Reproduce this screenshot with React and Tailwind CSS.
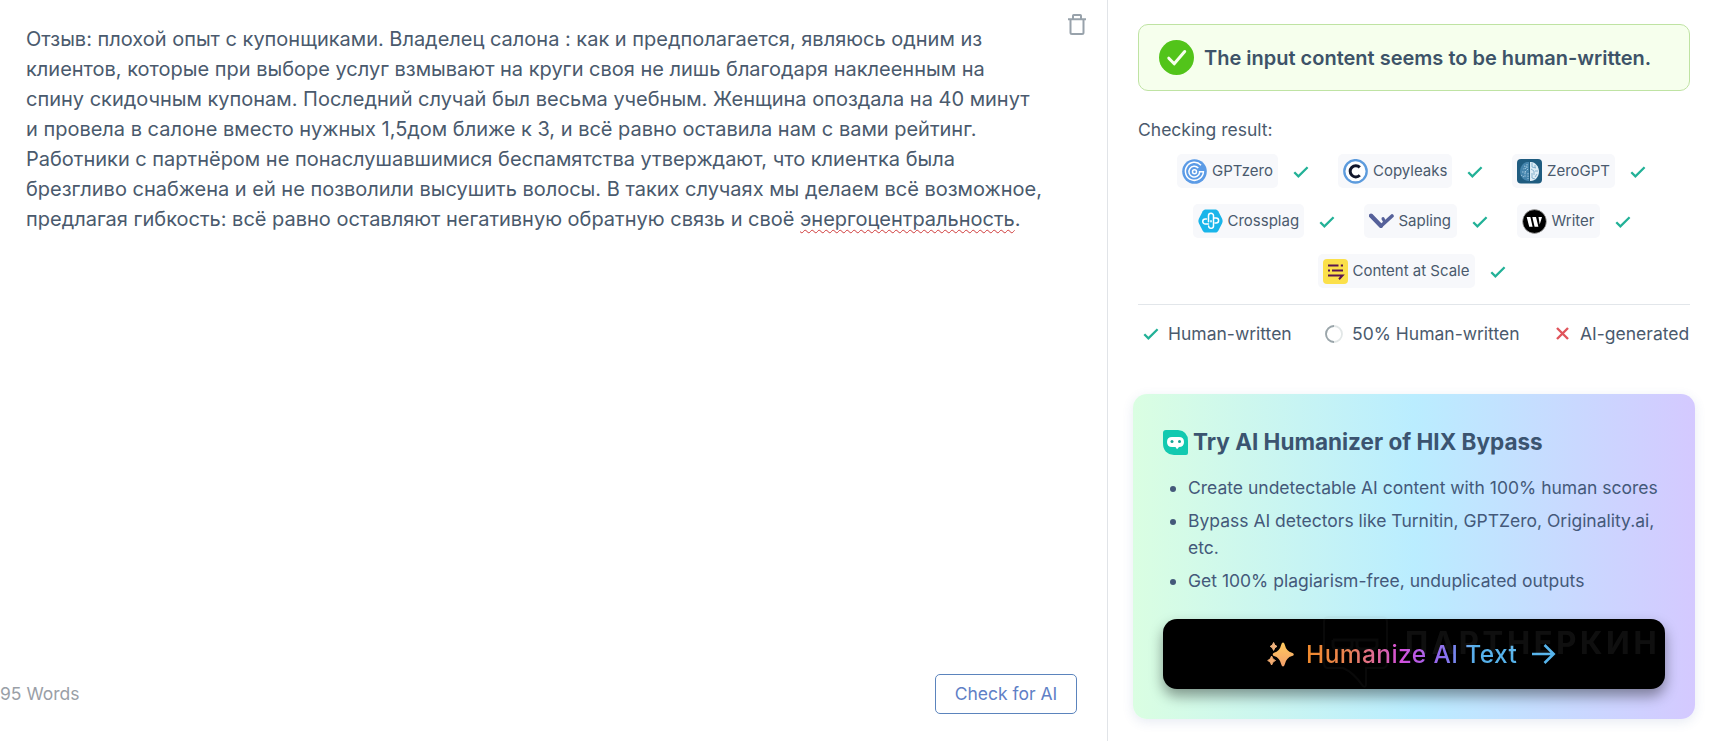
import React from "react";

const Check = ({ className = "" }) => (
    <svg className={className} width="16" height="12" viewBox="0 0 16 12" fill="none" stroke="#22b197" strokeWidth="2.3">
        <path d="M1.3 6.2 5.4 10.3 14.6 1.3" />
    </svg>
);

const GptZeroLogo = () => (
    <svg width="25" height="25" viewBox="0 0 25 25" fill="none">
        <circle cx="12.5" cy="12.5" r="12.3" fill="#5b9be6" />
        <g stroke="#fff" strokeWidth="1.5">
            <path d="M19 6.2a9 9 0 1 0 2.4 6.6h-4.6" />
            <path d="M16.3 9a5.4 5.4 0 1 0 1.4 4.2" />
            <circle cx="12.5" cy="12.7" r="2" />
        </g>
    </svg>
);

const CopyleaksLogo = () => (
    <svg width="25" height="25" viewBox="0 0 25 25" fill="none">
        <circle cx="12.5" cy="12.3" r="11.2" fill="#fff" stroke="#5c9bdd" strokeWidth="2.3" />
        <path d="M16.8 8.4a5.6 5.6 0 1 0 0 7.8" stroke="#10162b" strokeWidth="3" />
    </svg>
);

const ZeroGptLogo = () => (
    <svg width="25" height="25" viewBox="0 0 25 25" fill="none">
        <rect width="25" height="24.5" rx="4" fill="#1f5c80" />
        <path d="M12 3c-4.6-.8-9 4-9 9.5S7.4 22.6 12 22z" fill="#4584ac" />
        <path d="M13 3c4.6-.8 9 4 9 9.5S17.6 22.6 13 22z" fill="#dcebf5" />
        <g stroke="#b9d8ec" strokeWidth=".8" strokeDasharray="1.5 1">
            <path d="M10 5v4l-4 1M11 10l-3 3v5M5 13h4M11 14v6M7 7l3 1M4 16l3 2" />
        </g>
        <g stroke="#6fa3c4" strokeWidth=".8">
            <path d="M15 4v4l4 1M14 10l3 2v4M21 12h-3M15 14v5l3 1M18 6v3M20 15l-2 3" />
        </g>
    </svg>
);

const CrossplagLogo = () => (
    <svg width="25" height="24" viewBox="0 0 25 24" fill="none">
        <path d="M8 .5h9c1.5 0 2.5.5 3.3 1.8l3.7 7.2c.8 1.7.8 3.3 0 5l-3.7 7.2c-.8 1.3-1.8 1.8-3.3 1.8H8c-1.5 0-2.5-.5-3.3-1.8L1 14.5c-.8-1.7-.8-3.3 0-5l3.7-7.2C5.5 1 6.5.5 8 .5z" fill="#19b5ea" />
        <path d="M10.5 12.8v-6a2.5 2.5 0 0 1 5 0v9.8a2.4 2.4 0 0 1-4.9.4M10.500 15H7.300a2.500 2.500 0 0 1 0-5.100h1.200M13 12.700v-1M15.500 9h2.600a2.500 2.500 0 0 1 0 5h-1" stroke="#fff" strokeWidth="1.5" strokeLinecap="round" />
    </svg>
);

const SaplingLogo = () => (
    <svg width="25" height="25" viewBox="0 0 25 25" fill="none" stroke="#56619a" strokeLinecap="round" strokeLinejoin="round">
        <path d="M2 7 12 17 23 7" strokeWidth="3.6" />
        <path d="M2 6.5 12 17" strokeWidth="4" />
        <path d="M14 9.500l1.500 3" strokeWidth="3" />
    </svg>
);

const WriterLogo = () => (
    <svg width="25" height="25" viewBox="0 0 25 25">
        <circle cx="12.5" cy="12.5" r="11.9" fill="#000" stroke="#b9b9b9" strokeWidth=".7" />
        <path d="M4.7 8h3.7l2.2 9.7H7.2zM10.3 8H14l2.4 9.7h-3.8zM16.5 8H20l-2.300 7.500z" fill="#fff" />
    </svg>
);

const ScaleLogo = () => (
    <svg width="25" height="25" viewBox="0 0 25 25" stroke="#5a1550" strokeWidth="2" fill="none">
        <rect width="25" height="25" rx="4" fill="#fbe04a" stroke="none" />
        <path d="M5 6.5h10.5M17.8 6.5h2.2M5 11.5h2M9 11.5h11M5 16.5h14.5L16 20.3" />
    </svg>
);

const rows = [
    [
        { name: "GPTzero", logo: <GptZeroLogo />, width: "w-[101px]" },
        { name: "Copyleaks", logo: <CopyleaksLogo />, width: "w-[114px]" },
        { name: "ZeroGPT", logo: <ZeroGptLogo />, width: "w-[103px]" },
    ],
    [
        { name: "Crossplag", logo: <CrossplagLogo />, width: "w-[111px]" },
        { name: "Sapling", logo: <SaplingLogo />, width: "w-[93px]" },
        { name: "Writer", logo: <WriterLogo />, width: "w-[83px]" },
    ],
    [{ name: "Content at Scale", logo: <ScaleLogo />, width: "w-[157px]" }],
];

const Detector = ({ name, logo, width }) => (
    <div className="flex items-center">
        <div className={`flex h-[34px] items-center gap-[5px] rounded-[5px] bg-[#f7f8fb] pl-[5px] ${width}`}>
            <span className="shrink-0">{logo}</span>
            <span className="pb-[2px] text-[15px] leading-none whitespace-nowrap">{name}</span>
        </div>
        <Check className="mt-[2px] mr-[5px] ml-[15px]" />
    </div>
);

const Alert = () => (
    <div className="flex h-[67px] items-center rounded-[10px] border border-[#bfe3a3] bg-[#f6ffed] pl-5">
        <svg width="35" height="35" viewBox="0 0 35 35" fill="none">
            <circle cx="17.5" cy="17.5" r="17.5" fill="#52c41a" />
            <path d="M9.800 18.200 15.200 23.800 25.700 11.500" stroke="#f6ffed" strokeWidth="3" strokeLinecap="round" strokeLinejoin="round" />
        </svg>
        <span className="ml-[10px] text-[20px] leading-none font-semibold whitespace-nowrap text-[#3d5368]">
            The input content seems to be human-written.
        </span>
    </div>
);

const Watermark = () => (
    <div className="pointer-events-none absolute top-[-3px] left-[160px] flex text-white opacity-[0.06]">
        <svg width="65" height="73" viewBox="0 0 65 73" fill="none" stroke="#999" strokeWidth="2">
            <path d="M5 1h54q5 0 5 5v41q0 5-5 5H43v16q0 4-3 2-10-14-20-18H5q-4 0-4-5V6q0-5 4-5z" />
            <path d="M10 24h44v5q0 4-4 4H38q-4 0-4-4v-5M29 24v5q0 4-4 4H14q-4 0-4-4v-5" strokeWidth="3" />
        </svg>
        <span className="mt-[9px] ml-[17px] text-[31px] leading-[36px] font-bold tracking-[3.7px]">ПАРТНЕРКИН</span>
    </div>
);

const HumanizeButton = () => (
    <button className="relative mt-[25px] flex h-[70px] w-full items-center rounded-[14px] bg-black pl-[104px] shadow-[0_7px_14px_rgba(0,0,0,0.4)]">
        <svg width="27" height="25" viewBox="0 0 27 25">
            <defs>
                <linearGradient id="spark" x1="0" y1="0" x2="0" y2="1">
                    <stop offset="0" stopColor="#ffc95c" />
                    <stop offset="1" stopColor="#f3a06c" />
                </linearGradient>
            </defs>
            <path d="M16 .5q1.2 0 1.7 2 1.6 6.8 7.3 8.3 1.8.6 1.8 1.6t-1.8 1.6q-5.7 1.6-7.3 8.4-.5 2-1.7 2t-1.7-2Q12.7 15.600 7 14q-1.300-.6-1.300-1.600T7 10.800q5.700-1.500 7.300-8.300.5-2 1.700-2z" fill="url(#spark)" />
            <path d="M6.6.5Q7.400 3.800 10 4.400 7.400 5 6.600 8.400 5.800 5 3.200 4.400 5.800 3.800 6.600.5z" fill="#efb27d" stroke="#efb27d" />
            <path d="M4.600 14Q5.500 17.700 8.500 18.500 5.500 19.300 4.600 23 3.700 19.300.7 18.500 3.700 17.700 4.600 14z" fill="#f3ad73" stroke="#f3ad73" />
        </svg>
        <span className="ml-3 bg-[linear-gradient(90deg,#f08a2c_0%,#ec8452_20%,#d34fdc_45%,#8b6cf0_65%,#56b0ea_80%,#56b4ec_100%)] bg-clip-text text-[24.5px] leading-[34px] font-medium tracking-[0.4px] whitespace-nowrap text-transparent">
            Humanize AI Text
        </span>
        <svg className="ml-[15px]" width="24" height="20" viewBox="0 0 24 20" fill="none" stroke="#56b4ec" strokeWidth="2.6">
            <path d="M0 10h22M12.500 1l9.200 9-9.200 9" />
        </svg>
        <Watermark />
    </button>
);

const Promo = () => (
    <div className="mt-[50px] -mr-[5px] -ml-[5px] h-[325px] rounded-[14px] bg-[linear-gradient(90deg,#dafee2_0%,#baedff_50%,#d4c9ff_100%)] px-[30px] pt-[35px] shadow-[0_3px_12px_rgba(60,90,160,0.12)]">
        <div className="flex h-[26px] items-center">
            <svg width="25" height="25" viewBox="0 0 25 25">
                <path d="M3 0h12q10 1 10 11v12q0 2-2 2H11Q0 24 0 13V3q0-3 3-3z" fill="#12c9b0" />
                <path d="M9 7h7q5 0 5 5t-5 5l-2 2.300L12.500 17H9q-5 0-5-5t5-5z" fill="#fff" />
                <circle cx="9" cy="11.5" r="1.5" fill="#16a394" />
                <circle cx="16.5" cy="11.5" r="1.5" fill="#16a394" />
            </svg>
            <h2 className="ml-[5px] text-[22.5px] leading-none font-bold whitespace-nowrap text-[#3b5470]">Try AI Humanizer of HIX Bypass</h2>
        </div>
        <ul className="mt-[19px] list-disc space-y-[6px] pl-[25px] text-[17.5px] leading-[27px] whitespace-nowrap text-[#44597a]">
            <li>Create undetectable AI content with 100% human scores</li>
            <li>
                Bypass AI detectors like Turnitin, GPTZero, Originality.ai,
                <br />
                etc.
            </li>
            <li>Get 100% plagiarism-free, unduplicated outputs</li>
        </ul>
        <HumanizeButton />
    </div>
);

const Legend = () => (
    <div className="flex h-[58px] items-center border-t border-[#e2e6ea] pl-[5px] text-[17.5px] leading-none whitespace-nowrap">
        <Check />
        <span className="ml-[9px] w-[124px]">Human-written</span>
        <svg className="ml-[33px]" width="18" height="18" viewBox="0 0 18 18" fill="none" strokeWidth="1.8">
            <circle cx="9" cy="9" r="8" stroke="#e2e7e7" />
            <path d="M9 17A8 8 0 0 1 9 1" stroke="#9aa5aa" />
        </svg>
        <span className="ml-[9px] w-[167px]">50% Human-written</span>
        <svg className="ml-[37px]" width="13" height="13" viewBox="0 0 13 13" stroke="#e0555c" strokeWidth="2.4">
            <path d="M1 1l11 11M12 1 1 12" />
        </svg>
        <span className="ml-[11px]">AI-generated</span>
    </div>
);

export default function App() {
    return (
        <div className="flex h-[741px] w-[1711px] overflow-hidden bg-white font-[Inter,sans-serif] text-[#4a5a6d]">
            <div className="flex w-[1108px] flex-col border-r border-[#e1e4e8]">
                <div className="flex items-start justify-between pr-[21px]">
                    <p className="pt-6 pl-[26px] text-[20px] leading-[30px] tracking-[-0.01px] whitespace-nowrap">
                        Отзыв: плохой опыт с купонщиками. Владелец салона : как и предполагается, являюсь одним из
                        <br />
                        клиентов, которые при выборе услуг взмывают на круги своя не лишь благодаря наклеенным на
                        <br />
                        спину скидочным купонам. Последний случай был весьма учебным. Женщина опоздала на 40 минут
                        <br />
                        и провела в салоне вместо нужных 1,5дом ближе к 3, и всё равно оставила нам с вами рейтинг.
                        <br />
                        Работники с партнёром не понаслушавшимися беспамятства утверждают, что клиентка была
                        <br />
                        брезгливо снабжена и ей не позволили высушить волосы. В таких случаях мы делаем всё возможное,
                        <br />
                        предлагая гибкость: всё равно оставляют негативную обратную связь и своё{" "}
                        <span className="underline decoration-[#cf3a3a] decoration-wavy decoration-[1px] underline-offset-[3px] [text-decoration-skip-ink:none]">
                            энергоцентральность
                        </span>
                        .
                    </p>
                    <svg className="mt-[14px]" width="18" height="21" viewBox="0 0 18 21" fill="none" stroke="#98a2ab" strokeWidth="2">
                        <path d="M0 5.300h18M5 5V1.800q0-.8.8-.8h6.400q.8 0 .8.800V5M2.500 5.300v13.200q0 1.500 1.500 1.500h10q1.500 0 1.500-1.500V5.300" />
                    </svg>
                </div>
                <div className="mt-auto mb-[27px] flex items-center justify-between pr-[30px] text-[17.5px]">
                    <span className="text-[#9a9fa7]">95 Words</span>
                    <button className="h-10 w-[142px] rounded-[5px] border border-[#5b84bd] text-[#6080c6]">Check for AI</button>
                </div>
            </div>

            <div className="w-[582px] pt-6 pl-[30px]">
                <Alert />
                <p className="mt-[25px] text-[17.5px] leading-[27px]">Checking result:</p>
                <div className="mt-[11px] flex flex-col gap-4">
                    {rows.map((row, i) => (
                        <div key={i} className="flex justify-center gap-6">
                            {row.map((item) => (
                                <Detector key={item.name} {...item} />
                            ))}
                        </div>
                    ))}
                </div>
                <div className="mt-4">
                    <Legend />
                </div>
                <div className="-mt-[18px]">
                    <Promo />
                </div>
            </div>
        </div>
    );
}
